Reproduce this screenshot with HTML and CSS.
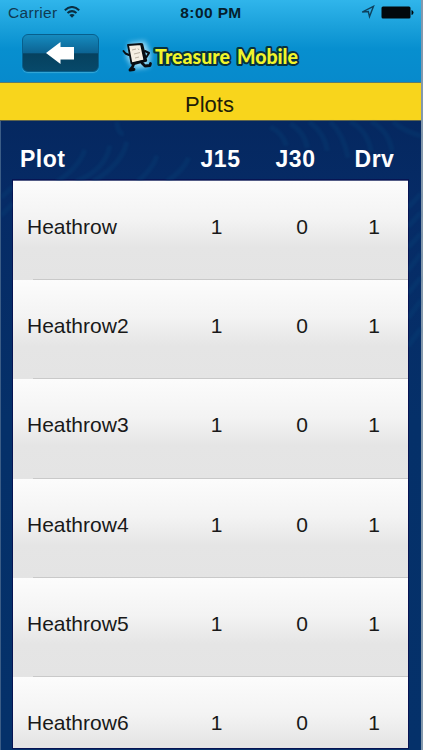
FILE: index.html
```html
<!DOCTYPE html>
<html lang="en">
<head>
<meta charset="utf-8">
<title>Plots</title>
<link rel="stylesheet" href="styles.css">
</head>
<body>
<div class="phone">
  <header class="top">
    <div class="status">
      <div class="carrier"><span>Carrier</span>
        <svg width="16" height="12" viewBox="0 0 16 12" fill="none" stroke="#0a2e42" stroke-width="2"><path d="M.8 4.2Q8-2.2 15.2 4.2"/><path d="M3.5 7Q8 3.200 12.500 7"/><path d="M8 11.800 5.300 9Q8 6.800 10.700 9Z" fill="#0a2e42" stroke="none"/></svg>
      </div>
      <div class="time">8:00 PM</div>
      <div class="indicators">
        <svg width="14" height="14" viewBox="0 0 14 14" fill="none" stroke="#0d415e" stroke-width="1.400"><path d="M1.200 7 12.500 1.300 8.500 11.600 7.300 6.600Z"/></svg>
        <svg width="33" height="13" viewBox="0 0 33 13" fill="#02080c"><rect x=".5" y=".5" width="29" height="12" rx="1.500"/><path d="M30.500 4Q32.500 4.500 32.500 6.500T30.500 9Z"/></svg>
      </div>
    </div>
    <nav class="nav">
      <button class="back" aria-label="Back">
        <svg width="28" height="22" viewBox="0 0 28 22" fill="#fff"><path d="M0 11 14.500 0V5H28V17.500H14.500V22Z"/></svg>
      </button>
      <div class="brand">
        <svg class="mascot" width="36" height="40" viewBox="0 0 36 40">
          <defs><filter id="glow" x="-50%" y="-50%" width="200%" height="200%"><feGaussianBlur stdDeviation="2.500"/></filter></defs>
          <path d="M8 7 24 5 30 18 28 31 13 33 5 21Z" fill="#a9e3fa" opacity=".85" filter="url(#glow)"/>
          <g fill="none" stroke="#080d12" stroke-linecap="round" stroke-linejoin="round">
            <path d="M8 19 4.500 17.500 2.500 15M24 15 28 17 25.500 21" stroke-width="2"/>
            <path d="M13 27 11.500 31 9 34M9 34 13 33.500M21 27 24 30 29 29.500M29 29.500 29.500 27.500" stroke-width="2.800"/>
            <path d="M7 9 20 8 23.500 24.500 10.500 27.500Z" fill="#f4eee2" stroke-width="1.800"/>
            <path d="M21 8.500 25 24.500 12 28" stroke-width="2.400"/>
          </g>
          <path d="M11 14 15 13M13 18 19 16.500M17 12.500 18 14M14 22 18 21" stroke="#aaa090" stroke-width=".8"/>
        </svg>
        <svg class="wordmark" width="152" height="30" viewBox="0 0 152 30"><text x="4" y="21" textLength="75" lengthAdjust="spacingAndGlyphs">Treasure</text><text x="86" y="21" textLength="61" lengthAdjust="spacingAndGlyphs">Mobile</text></svg>
      </div>
    </nav>
  </header>
  <h1 class="title">Plots</h1>
  <main class="content">
    <svg class="leaves" width="420" height="628" viewBox="0 0 421 628" fill="none" stroke="#075083" stroke-width="5">
      <path d="M56 60Q78 46 84 28M75 60Q105 48 109 24M92 60Q122 42 126 20M116 0Q117 12 123 12M137 60Q154 45 156 34M166 60Q184 48 188 36M270 5Q283 12 286 24M290 2Q304 10 307 26M309 0Q325 12 327 29M330 0Q343 12 348 36M350 0Q367 8 371 30M371 0Q388 8 392 29M393 0Q405 10 421 14M0 76 12 65M0 94 12 82M408 86 421 72M408 105 421 91M408 126 421 112M408 149 421 132M408 172 421 156M408 197 421 179M408 225 421 207"/>
    </svg>
    <div class="row head"><span>Plot</span><span>J15</span><span>J30</span><span>Drv</span></div>
    <div class="list">
      <div class="row item"><span>Heathrow</span><span>1</span><span>0</span><span>1</span></div>
      <div class="row item"><span>Heathrow2</span><span>1</span><span>0</span><span>1</span></div>
      <div class="row item"><span>Heathrow3</span><span>1</span><span>0</span><span>1</span></div>
      <div class="row item"><span>Heathrow4</span><span>1</span><span>0</span><span>1</span></div>
      <div class="row item"><span>Heathrow5</span><span>1</span><span>0</span><span>1</span></div>
      <div class="row item"><span>Heathrow6</span><span>1</span><span>0</span><span>1</span></div>
    </div>
  </main>
</div>
</body>
</html>
```
FILE: styles.css
```css
* { box-sizing: border-box; }
body {
  margin: 0;
  background: #8499ad;
  font-family: "Liberation Sans", Arial, sans-serif;
  overflow: hidden;
}
.phone {
  width: 421px;
  height: 750px;
  display: flex;
  flex-direction: column;
}
.top {
  height: 83px;
  flex: none;
  background: linear-gradient(#30b5eb 0, #1ba1db 26px, #078fcf 49px, #078acc 82px);
  border-bottom: 1px solid #607b69;
}
.status {
  height: 25px;
  display: grid;
  grid-template-columns: 1fr 1fr 1fr;
  align-items: center;
  padding: 0 7px 0 8px;
  font-size: 15.5px;
  color: #103b53;
}
.carrier, .indicators { display: flex; align-items: center; }
.carrier { gap: 7px; letter-spacing: .3px; }
.carrier svg { margin-top: -2px; }
.time {
  text-align: center;
  color: #051e2d;
  font-size: 15.5px;
  font-weight: bold;
  letter-spacing: .4px;
}
.indicators { justify-content: flex-end; gap: 6px; margin-top: -1px; }
.nav { display: flex; align-items: flex-start; padding: 9px 0 0 22px; }
.back {
  width: 77px;
  height: 38px;
  padding: 0 1px 0 0;
  border: 1px solid #075f8d;
  border-radius: 6px;
  background: linear-gradient(#168bbf 0, #0c6392 50%, #06415f 52%, #07496a 100%);
  box-shadow: 0 1px 1px #37a8d8;
  display: flex;
  align-items: center;
  justify-content: center;
}
.brand { display: flex; align-items: flex-start; margin-left: 22px; }
.mascot { margin-top: 2px; }
.wordmark { margin: 9px 0 0 -6px; }
.wordmark text {
  font: 900 20px Lato, sans-serif;
  fill: #f0f52b;
  stroke: #073340;
  stroke-width: 4px;
  stroke-linejoin: round;
  paint-order: stroke;
}
.title {
  flex: none;
  margin: 0;
  height: 38px;
  padding-right: 2px;
  background: #f8d51c;
  border-bottom: 1px solid #5f644c;
  font-size: 22px;
  line-height: 44px;
  font-weight: normal;
  text-align: center;
  color: #211d08;
}
.content {
  flex: 1;
  position: relative;
  padding: 0 13px 2px;
  border-left: 1px solid #3c5d86;
  background: linear-gradient(#052860 0, #062b66 80px, #053069 300px, #05316a 100%);
  min-height: 0;
  display: flex;
  flex-direction: column;
}
.leaves { position: absolute; left: 0; top: 0; opacity: .2; filter: blur(1.2px); }
.row { display: grid; align-items: center; position: relative; }
.row span:not(:first-child) { text-align: center; }
.head {
  height: 59px;
  flex: none;
  grid-template-columns: 163px 75px 75px 83px;
  padding: 17px 0 0 6px;
  margin-right: -8px;
  color: #fff;
  font-size: 23px;
  font-weight: bold;
  letter-spacing: .5px;
}
.list {
  flex: 1;
  min-height: 0;
  overflow: hidden;
  margin: 0 0 0 -1px;
  border-top: 1px solid #535c86;
  box-shadow: 0 0 0 1px #071453;
}
.item {
  height: 99.2px;
  grid-template-columns: 147px 85px 86px 58px;
  padding: 0 0 7px 14px;
  background: linear-gradient(#fcfcfc 0, #f3f3f3 38%, #e5e5e5 67%, #e4e4e4 100%);
  font-size: 21px;
  color: #191919;
}
.item::after {
  content: "";
  position: absolute;
  left: 20px;
  right: 0;
  bottom: 0;
  height: 1px;
  background: #c9c9c9;
}
```
